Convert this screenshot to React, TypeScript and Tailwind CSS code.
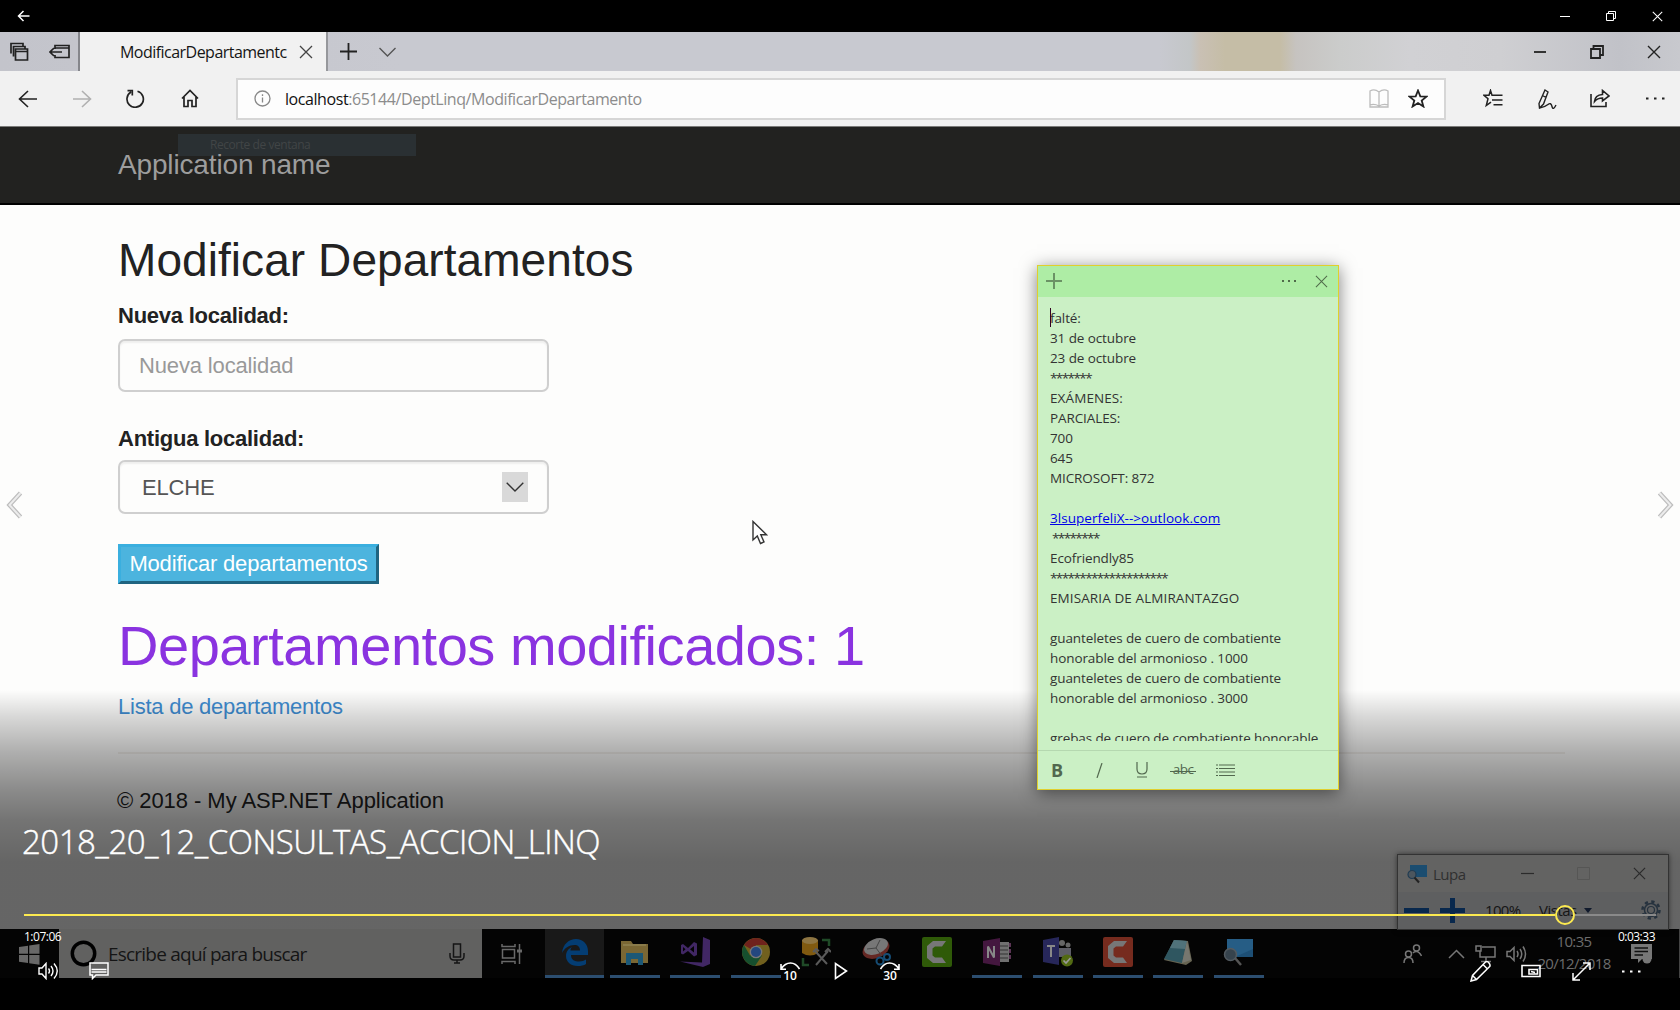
import React from "react";

type IconProps = { w: number; h: number; box?: string; className?: string; sw?: number; children: React.ReactNode };

function Ico({ w, h, box, className = "", sw = 1.5, children }: IconProps) {
  return (
    <svg width={w} height={h} viewBox={box ?? `0 0 ${w} ${h}`} fill="none" stroke="currentColor" strokeWidth={sw} className={`block shrink-0 ${className}`}>
      {children}
    </svg>
  );
}

function Cross({ size, sw = 1.3, className = "" }: { size: number; sw?: number; className?: string }) {
  return (
    <Ico w={size} h={size} box="0 0 14 14" sw={sw} className={className}>
      <path d="M1 1L13 13M13 1L1 13" />
    </Ico>
  );
}

function TitleBar() {
  return (
    <div className="flex h-8 shrink-0 items-center bg-black pl-[17px] pr-[18px] text-white">
      <Ico w={13} h={12} sw={1.5}>
        <path d="M12.5 6H1.5M6.5 1L1.5 6L6.5 11" />
      </Ico>
      <div className="ml-auto flex items-center gap-[36px]">
        <Ico w={10} h={10} sw={1}>
          <path d="M0 5.5H10" />
        </Ico>
        <Ico w={10} h={10} sw={1}>
          <path d="M.5 2.5h7v7h-7zM2.5 2.5V.5h7v7h-2" />
        </Ico>
        <Cross size={11} sw={1.3} className="-mr-[1px]" />
      </div>
    </div>
  );
}

function TabStrip() {
  return (
    <div className="flex h-[39px] shrink-0 bg-[linear-gradient(90deg,#c3c4cb_0,#c8c9d0_400px,#c8c9d0_1160px,#c3c6c7_1190px,#c9c0b4_1200px,#c5bda6_1225px,#c5bda6_1280px,#c6c3c0_1296px,#cbcccb_1340px,#d1d1d4_1410px,#cfcfd2_1500px,#c1c2c8_1620px,#c8c9ce_1680px)] text-[#222]">
      <div className="flex w-[80px] items-center border-r-2 border-[#85868b] pl-[10px]">
        <Ico w={19} h={19} sw={1.7}>
          <path d="M5.5 7h12v11h-12zM5.5 9.5h12M3.500 14.500V4.500H15V7M1 11.500V1.500H13V4" />
        </Ico>
        <Ico w={21} h={15} sw={1.7} className="ml-[20px]">
          <path d="M6 5V1.500H20V13.500H6V11M6 4h14M1 8h12M5 4L1 8L5 12" />
        </Ico>
      </div>
      <div className="flex w-[248px] items-center border-r-2 border-[#96979b] bg-[#f1f1f1] pl-[40px]">
        <span className="w-[169px] overflow-hidden whitespace-nowrap font-['Open_Sans'] text-[16px] leading-[22px] tracking-[-0.53px] text-[#151515]">ModificarDepartamentc</span>
        <Cross size={14} className="ml-[10px] text-[#444]" />
      </div>
      <div className="flex items-center pl-[12px]">
        <Ico w={17} h={17} sw={1.8}>
          <path d="M8.500 0V17M0 8.500H17" />
        </Ico>
        <Ico w={17} h={10} sw={1.4} className="ml-[22px] text-[#555]">
          <path d="M.5 1L8.500 9L16.500 1" />
        </Ico>
      </div>
      <div className="ml-auto flex items-center pr-[19px]">
        <Ico w={14} h={14} sw={1.8}>
          <path d="M1 7H13" />
        </Ico>
        <Ico w={14} h={14} sw={1.8} className="ml-[43px]">
          <path d="M1 4h9v9h-9zM3.500 4V1h9.500v9h-3" />
        </Ico>
        <Cross size={14} sw={1.4} className="ml-[43px]" />
      </div>
    </div>
  );
}

function AddressRow() {
  return (
    <div className="flex h-[56px] shrink-0 items-center border-b border-[#7b7b79] bg-[#f1f1f1] pl-[18px] text-[#222]">
      <Ico w={20} h={18} sw={1.6}>
        <path d="M19 9H1.500M10 1L1.500 9L10 17" />
      </Ico>
      <Ico w={20} h={18} sw={1.6} className="ml-[34px] text-[#b0b0b0]">
        <path d="M1 9H18.500M10 1L18.500 9L10 17" />
      </Ico>
      <Ico w={20} h={19} sw={1.7} className="ml-[33px]">
        <path d="M12.500 2.200A8.200 8.200 0 1 1 6 3M2.500 1.600H7.300V6.400" />
      </Ico>
      <Ico w={18} h={19} sw={1.7} className="ml-[36px]">
        <path d="M1 9.500L9 1.500L17 9.500M3 8V17.500H7V11.500H11V17.500H15V8" />
      </Ico>
      <div className="ml-[37px] flex h-[42px] w-[1210px] items-center border-2 border-[#d6d6d6] bg-[#fdfdfd] pl-[16px]">
        <Ico w={17} h={17} sw={1.3} className="text-[#888]">
          <circle cx="8.500" cy="8.500" r="7.500" />
          <path d="M8.500 7.500V12.500M8.500 4.300V6" />
        </Ico>
        <span className="ml-[14px] whitespace-nowrap font-['Open_Sans'] text-[16px] leading-[22px] tracking-[-0.43px] text-[#8c8c8c]">
          <span className="text-[#111]">localhost</span>:65144/DeptLinq/ModificarDepartamento
        </span>
        <Ico w={20} h={19} sw={1.3} className="ml-auto text-[#bcbcbc]">
          <path d="M10 3Q5.500 -.5 1 2V16Q5.500 14.500 10 17Q14.500 14.500 19 16V2Q14.500 -.5 10 3V17M1 16V18H19V16" />
        </Ico>
        <Ico w={20} h={19} sw={1.8} className="ml-[19px] mr-[16px]">
          <path d="M10 1.500L12.300 7.300L18.500 7.600L13.700 11.500L15.400 17.500L10 14.100L4.600 17.500L6.300 11.500L1.500 7.600L7.700 7.300Z" />
        </Ico>
      </div>
      <Ico w={20} h={19} sw={1.5} className="ml-[37px]">
        <path d="M12.500 6.300L9 6.300L7.500 1.500L6 6.300H1L5 9.800L3.300 16.500L8 13.200M10.500 6.300H19.500M9 11H19.500M10.500 15.700H19.500" />
      </Ico>
      <Ico w={20} h={20} sw={1.4} className="ml-[34px]">
        <path d="M8 1L11 3L6.500 15L2.500 19L2 14.500ZM5.500 6.500L9 8.500M2.500 19Q8 18 11 15.500T15 17.500T19 16" />
      </Ico>
      <Ico w={20} h={19} sw={1.6} className="ml-[33px]">
        <path d="M1 5V17.500H16V13M4.500 12.500Q5 6 12.500 5.500V1.500L19 7L12.500 12V9Q7.500 9 4.500 12.500Z" />
      </Ico>
      <Ico w={19} h={3} className="ml-[36px]">
        <path d="M0 1.500H2.500M8 1.500H10.500M16 1.500H18.500" strokeWidth="2.200" />
      </Ico>
    </div>
  );
}

function AppHeader() {
  return (
    <div className="relative h-[78px] shrink-0 border-b-2 border-black bg-[#222220] pl-[118px]">
      <div className="absolute left-[178px] top-[7px] h-[22px] w-[238px] bg-[#2a3033] pl-[32px] font-['Open_Sans'] text-[12px] leading-[21px] tracking-[-0.45px] text-[#414546]">Recorte de ventana</div>
      <div className="relative pt-[22px] font-['Liberation_Sans'] text-[28px] leading-[32px] tracking-[-0.15px] text-[#9d9d9d]">Application name</div>
    </div>
  );
}

function FormPage() {
  return (
    <div className="flex h-[724px] shrink-0 flex-col items-start bg-[#fdfdfc] pl-[118px] font-['Liberation_Sans'] text-[#222]">
      <h2 className="mt-[29px] h-[52px] whitespace-nowrap text-[46px] leading-[52px] tracking-[0.07px]">Modificar Departamentos</h2>
      <label className="mt-[18px] h-[24px] whitespace-nowrap text-[22px] font-bold leading-[24px] tracking-[-0.25px]">Nueva localidad:</label>
      <div className="mt-[11px] flex h-[53px] w-[431px] items-center rounded-[7px] border-2 border-[#cfcfcf] pl-[19px] text-[22px] tracking-[-0.15px] text-[#999] shadow-[inset_0_2px_2px_rgba(0,0,0,0.06)]">
        <span className="whitespace-nowrap">Nueva localidad</span>
      </div>
      <label className="mt-[35px] h-[24px] whitespace-nowrap text-[22px] font-bold leading-[24px] tracking-[-0.25px]">Antigua localidad:</label>
      <div className="mt-[9px] flex h-[54px] w-[431px] items-center justify-between rounded-[7px] border-2 border-[#cfcfcf] pl-[22px] pr-[19px] text-[22px] tracking-[-0.15px] text-[#555] shadow-[inset_0_2px_2px_rgba(0,0,0,0.06)]">
        <span>ELCHE</span>
        <div className="flex h-[30px] w-[26px] items-center justify-center bg-[#d9d9d9]">
          <Ico w={18} h={10} sw={1.4} className="text-[#333]">
            <path d="M.7 .8L9 9L17.300 .8" />
          </Ico>
        </div>
      </div>
      <div className="mt-[30px] flex h-[40px] w-[261px] items-center justify-center whitespace-nowrap border-[3px] border-b-[#1f6480] border-l-[#3aafdf] border-r-[#1f6480] border-t-[#3aafdf] bg-[#4cb4de] pb-px text-[22px] tracking-[-0.17px] text-white">Modificar departamentos</div>
      <h1 className="mt-[30px] h-[64px] whitespace-nowrap text-[56px] leading-[64px] tracking-[-0.46px] text-[#8a33e0]">Departamentos modificados: 1</h1>
      <a className="mt-[16px] h-[26px] whitespace-nowrap text-[22px] leading-[26px] tracking-[-0.24px] text-[#3f8dd2]">Lista de departamentos</a>
      <div className="mt-[32px] h-[2px] w-[1447px] bg-[#f2f0ec]" />
      <p className="-ml-px mt-[34px] h-[26px] whitespace-nowrap text-[22px] leading-[26px] tracking-[-0.05px]">© 2018 - My ASP.NET Application</p>
    </div>
  );
}

const camtasia = (bg: string) => (
  <Ico w={30} h={30} sw={0}>
    <rect width="30" height="30" rx="2" fill={bg} />
    <path d="M24 4H11L5 9V21L11 26H24L20 20.500H13L10.500 18.500V11.500L13 9.500H20Z" fill="#777" />
  </Ico>
);

const magnifier = (
  <Ico w={31} h={30} sw={0}>
    <path d="M4 2H30V20H4Z" fill="#1d4f75" />
    <path d="M4 2H30V12L12 20H4Z" fill="#265d85" />
    <path d="M12 21L18 28" stroke="#555" strokeWidth="2.500" />
    <circle cx="7.500" cy="17.500" r="6" fill="#36434d" stroke="#525a60" strokeWidth="1.500" />
  </Ico>
);

const apps: { icon: React.ReactNode; tile?: boolean; open?: boolean }[] = [
  {
    tile: true,
    open: true,
    icon: (
      <Ico w={26} h={27} sw={0}>
        <path d="M0 14C1 5 7 0 14 0C21 0 26 5 26 12V16H9C9 21 13 22.500 17 22.500C20 22.500 22 21.500 24 20.500V25C22 26.500 19 27 15.500 27C9 27 4 23 4 17C4 12.500 6.500 9.500 10 8C8.500 9.500 8.500 11 8.500 11.500H18C18 8 16 6 12.500 6C7 6 2.500 9 0 14Z" fill="#043d73" />
      </Ico>
    ),
  },
  {
    open: true,
    icon: (
      <Ico w={27} h={25} sw={0}>
        <path d="M0 1H10L12 4H27V23H0Z" fill="#7a6734" />
        <path d="M2 4H25V6H2Z" fill="#8a7b4a" />
        <path d="M5 13H22V25H17V19H10V25H5Z" fill="#1c5876" />
      </Ico>
    ),
  },
  {
    open: true,
    icon: (
      <Ico w={30} h={30} sw={0}>
        <path d="M23 0L30 3V27L23 30L0 24.500L22 25.500Z" fill="#412764" />
        <path d="M1 8L3 7L8 11L14 5L17 6.500V18L14 19.500L8 14L3 17.500L1 16.500ZM3 10V14.500L5.500 12.300ZM14 9L10 12.300L14 15.500Z" fill="#412764" fillRule="evenodd" />
      </Ico>
    ),
  },
  {
    open: true,
    icon: (
      <Ico w={28} h={28} sw={0}>
        <circle cx="14" cy="14" r="14" fill="#71601e" />
        <path d="M14 14L1.900 7A14 14 0 0 1 26.100 7H14Z" fill="#6f221c" />
        <path d="M1.900 7A14 14 0 0 0 13 28L20 17.500H8Z" fill="#164f2e" />
        <circle cx="14" cy="14" r="6.300" fill="#777" />
        <circle cx="14" cy="14" r="5" fill="#23477f" />
      </Ico>
    ),
  },
  {
    icon: (
      <Ico w={30} h={30} sw={0}>
        <path d="M1 3V16Q9 21 17 16V3Z" fill="#805a10" />
        <ellipse cx="9" cy="3.500" rx="8" ry="3.500" fill="#8d7542" />
        <path d="M21 3H28V9M2 21V28H8" stroke="#1f4a27" strokeWidth="2.500" />
        <path d="M14 14L26 27M27 14L15 28" stroke="#5a5a5a" strokeWidth="2" />
        <path d="M24 15L27 12L30 15M12 15L15 12L18 14" stroke="#5a5a5a" strokeWidth="2" />
      </Ico>
    ),
  },
  {
    icon: (
      <Ico w={29} h={30} sw={0}>
        <ellipse cx="14" cy="12" rx="14" ry="9" transform="rotate(-22 14 12)" fill="#652824" />
        <ellipse cx="14" cy="9.500" rx="12.500" ry="7.500" transform="rotate(-22 14 9.500)" fill="#777" />
        <path d="M14 11L18 3M14 11L5 12M14 11L20 19" stroke="#444" strokeWidth="1" />
        <circle cx="18" cy="24" r="3.500" stroke="#164d75" strokeWidth="2" />
        <circle cx="25" cy="20" r="3" stroke="#164d75" strokeWidth="2" />
      </Ico>
    ),
  },
  { icon: camtasia("#2f5a08") },
  {
    open: true,
    icon: (
      <Ico w={28} h={28} sw={0}>
        <path d="M14 4H26V24H14Z" fill="#707070" />
        <path d="M26 5h2v4h-2zM26 11h2v4h-2zM26 17h2v4h-2z" fill="#5b3555" />
        <path d="M17 8H25M17 12H25M17 16H25M17 20H25" stroke="#333" strokeWidth="1" />
        <path d="M0 3L17 0V28L0 25Z" fill="#44173f" />
        <path d="M5 20V8.500L11 19.500V8" stroke="#888" strokeWidth="2" />
      </Ico>
    ),
  },
  {
    open: true,
    icon: (
      <Ico w={30} h={30} sw={0}>
        <circle cx="19" cy="6" r="3" fill="#666" />
        <circle cx="25" cy="8" r="2.500" fill="#666" />
        <path d="M15 11H28V20H15Z" fill="#5d5d66" />
        <path d="M0 3L16 0V28L0 25Z" fill="#27275a" />
        <path d="M4 9H12M8 9V20" stroke="#888" strokeWidth="2" />
        <circle cx="24" cy="23.500" r="6" fill="#526a13" />
        <path d="M20.500 23.500L23 26L27.500 21" stroke="#999" strokeWidth="1.700" />
      </Ico>
    ),
  },
  { open: true, icon: camtasia("#762b1e") },
  {
    open: true,
    icon: (
      <Ico w={28} h={28} sw={0}>
        <path d="M10 2L24 3L28 23L22 27L0 22Z" fill="#676452" />
        <path d="M10 2L23 3L18 25L0 21Z" fill="#2f5660" />
        <path d="M10 2L23 3L21 11L6 10Z" fill="#50727a" />
        <path d="M23 3L27 22L18 25Z" fill="#77776f" />
      </Ico>
    ),
  },
  { open: true, icon: magnifier },
];

function Taskbar() {
  return (
    <div className="flex h-[49px] shrink-0 bg-[#040404]">
      <div className="flex w-[59px] items-center pl-[19px]">
        <Ico w={21} h={21} sw={0} className="mt-[2px]">
          <path d="M0 3L9 1.700V9.800H0ZM10.200 1.500L20.500 0V9.800H10.200ZM0 11H9V19L0 17.800ZM10.200 11H20.500V20.800L10.200 19.300Z" fill="#686868" />
        </Ico>
      </div>
      <div className="flex w-[423px] items-center bg-[#616160] pl-[11px] pr-[17px]">
        <Ico w={27} h={27} sw={3.5} className="text-black">
          <circle cx="13.500" cy="13.500" r="11.200" />
        </Ico>
        <span className="ml-[11px] whitespace-nowrap font-['Open_Sans'] text-[19px] leading-[26px] tracking-[-0.78px] text-[#151515]">Escribe aquí para buscar</span>
        <Ico w={16} h={21} sw={1.500} className="ml-auto text-[#151515]">
          <path d="M4.500 1H11.500V14H4.500ZM1 10V13Q1 17 5 17H11Q15 17 15 13V10M8 17V20M5 20H11" />
        </Ico>
      </div>
      <div className="flex w-[63px] items-center pl-[19px]">
        <Ico w={21} h={20} sw={1.500} className="text-[#696969]">
          <path d="M1.500 5.500H13.500V14H1.500ZM1 0V2.500H14V0M1 20V17.500H14V20M18.500 0V20" />
          <path d="M16 7H21" strokeWidth="3" />
        </Ico>
      </div>
      <div className="flex">
        {apps.map((a, i) => (
          <div key={i} className={`mr-[1.4px] flex w-[59px] flex-col items-center ${a.tile ? "bg-[#191919]" : ""}`}>
            <div className="flex h-[46px] items-center justify-center">{a.icon}</div>
            {a.open && <div className={`h-[3px] bg-[#2c4e70] ${a.tile ? "w-[59px]" : "w-[50px]"}`} />}
          </div>
        ))}
      </div>
      <div className="ml-auto flex h-[49px] items-center border-r border-[#444] pr-[27px] text-[#777]">
        <Ico w={19} h={20} sw={1.500}>
          <circle cx="13.500" cy="4" r="3" />
          <circle cx="5.500" cy="10" r="3" />
          <path d="M1 19Q1 13.500 5.500 13.500T10 19M10 9Q11 7.500 13.500 7.500T18.500 12" />
        </Ico>
        <Ico w={17} h={10} sw={1.500} className="ml-[26px]">
          <path d="M1 9L8.500 1.500L16 9" />
        </Ico>
        <Ico w={21} h={18} sw={1.500} className="ml-[10px]">
          <path d="M7 2H20V12H5V6M11 12V16M6 16.500H16M1 1H6V6H1Z" />
        </Ico>
        <Ico w={21} h={18} sw={1.500} className="ml-[10px]">
          <path d="M1 6.500H4L8 2.500V15.500L4 11.500H1ZM11 6Q13 9 11 12M14 4Q17.500 9 14 14M17 1.500Q22 9 17 16.500" />
        </Ico>
        <div className="ml-[11px] w-[72px] pb-[4px] text-center font-['Open_Sans'] text-[15px] leading-[22px] tracking-[-0.65px] text-[#6c6c6c]">
          <div>10:35</div>
          <div className="-mx-2 whitespace-nowrap">20/12/2018</div>
        </div>
        <Ico w={21} h={20} sw={0} className="ml-[21px]">
          <path d="M0 0H21V15H11L7 19V15H0Z" fill="#777" />
          <path d="M3.500 4H17M3.500 7.500H17M3.500 11H12" stroke="#111" strokeWidth="1.500" />
          <circle cx="16" cy="15" r="4.500" fill="#777" stroke="#050505" />
        </Ico>
      </div>
    </div>
  );
}

type Line = { t: string; kind?: "stars" | "caps" | "link" };

const noteLines: Line[] = [
  { t: "falté:" },
  { t: "31 de octubre" },
  { t: "23 de octubre" },
  { t: "*******", kind: "stars" },
  { t: "EXÁMENES:", kind: "caps" },
  { t: "PARCIALES:" },
  { t: "700" },
  { t: "645" },
  { t: "MICROSOFT: 872" },
  { t: "" },
  { t: "3lsuperfeliX-->outlook.com", kind: "link" },
  { t: " ********", kind: "stars" },
  { t: "Ecofriendly85" },
  { t: "********************", kind: "stars" },
  { t: "EMISARIA DE ALMIRANTAZGO", kind: "caps" },
  { t: "" },
  { t: "guanteletes de cuero de combatiente" },
  { t: "honorable del armonioso . 1000" },
  { t: "guanteletes de cuero de combatiente" },
  { t: "honorable del armonioso . 3000" },
  { t: "" },
  { t: "grebas de cuero de combatiente honorable" },
];

const lineStyle = {
  stars: "tracking-[-1.58px]",
  caps: "tracking-[0.1px]",
  link: "tracking-[0.05px] text-[#0000e8] underline",
};

function StickyNote() {
  return (
    <div className="absolute left-[1037px] top-[265px] flex h-[525px] w-[302px] flex-col border border-[#e0cf2c] bg-[#cbf0c5] font-['Open_Sans'] shadow-[0_3px_16px_rgba(0,0,0,0.5)]">
      <div className="flex h-[31px] shrink-0 items-center bg-[#aeeda5] pb-px pl-[8px] pr-[10px] text-[#6b9265]">
        <Ico w={16} h={16} sw={2}>
          <path d="M8 0V16M0 8H16" />
        </Ico>
        <Ico w={15} h={2} sw={2} className="ml-auto text-[#4f6b4a]">
          <path d="M0 1H2M6 1H8M12 1H14" />
        </Ico>
        <Cross size={13} sw={1.100} className="ml-[18px] text-[#4f6b4a]" />
      </div>
      <div className="relative h-[444px] shrink-0 overflow-hidden whitespace-pre pl-[12px] pt-[11px] text-[13.500px] leading-[20px] tracking-[-0.1px] text-[#333]">
        <div className="absolute left-[12px] top-[11px] h-[19px] w-px bg-[#302]" />
        {noteLines.map((l, i) => (
          <div key={i} className="h-[20px]">
            <span className={l.kind ? lineStyle[l.kind] : ""}>{l.t}</span>
          </div>
        ))}
      </div>
      <div className="mt-[9px] flex flex-1 items-center border-t border-[#b5d8b0] pl-[13px] text-[#52684e]">
        <span className="w-[45px] text-[18px] font-bold leading-none">B</span>
        <Ico w={7} h={15} sw={1.200}>
          <path d="M6 0L1 15" />
        </Ico>
        <Ico w={12} h={16} sw={1.200} className="ml-[33px]">
          <path d="M1 0V7Q1 12 6 12T11 7V0M1 15H11" />
        </Ico>
        <span className="relative ml-[22px] flex w-[26px] items-center justify-center text-[13.500px] leading-none tracking-[-0.5px]">
          abc
          <i className="absolute inset-x-0 top-[8px] h-px bg-[#52684e]" />
        </span>
        <Ico w={19} h={13} sw={1.200} className="ml-[20px]">
          <path d="M0 1H2M3 1H19M0 4.500H2M3 4.500H19M0 8H2M3 8H19M0 11.500H2M3 11.500H19" />
        </Ico>
      </div>
    </div>
  );
}

function Lupa() {
  return (
    <div className="absolute left-[1397px] top-[854px] flex h-[76px] w-[272px] flex-col border border-[#333] bg-[#636362] shadow-[0_0_5px_rgba(0,0,0,0.5)]">
      <div className="flex h-[37px] items-center pl-[9px] pr-[22px] text-[#2b2b2b]">
        <Ico w={21} h={20} sw={0}>
          <path d="M3 1H20V13H3Z" fill="#1b4d70" />
          <circle cx="5" cy="10.500" r="4" fill="#4c565e" stroke="#213c52" strokeWidth="1.200" />
          <path d="M7.500 13.500L12 18.500" stroke="#222" strokeWidth="2" />
        </Ico>
        <span className="ml-[5px] font-['Open_Sans'] text-[15px] leading-5 tracking-[-0.5px] text-[#303030]">Lupa</span>
        <Ico w={13} h={13} sw={1.200} className="ml-auto">
          <path d="M0 6.500H13" />
        </Ico>
        <Ico w={13} h={13} sw={1} className="ml-[43px] text-[#565655]">
          <path d="M.5 .5h12v12h-12z" />
        </Ico>
        <Cross size={13} className="ml-[43px]" />
      </div>
      <div className="flex flex-1 items-center bg-[#5e5f60] pb-px pl-[6px] pr-[7px] font-['Open_Sans'] text-[15px] leading-5 text-[#151515]">
        <Ico w={25} h={25} sw={5} className="text-[#08284d]">
          <path d="M0 12.500H25" />
        </Ico>
        <Ico w={25} h={25} sw={5} className="ml-[11px] text-[#08284d]">
          <path d="M0 12.500H25M12.500 0V25" />
        </Ico>
        <span className="ml-[20px] w-[54px] tracking-[-0.7px]">100%</span>
        <span className="w-[45px] tracking-[-0.5px]">Vistas</span>
        <Ico w={8} h={5} sw={0}>
          <path d="M0 0H8L4 5Z" fill="#101a2c" />
        </Ico>
        <Ico w={20} h={20} sw={2} className="ml-auto text-[#26323e]">
          <circle cx="10" cy="10" r="8.500" strokeDasharray="3.300 3.375" strokeWidth="2.500" />
          <circle cx="10" cy="10" r="6.500" strokeWidth="1.500" />
          <circle cx="10" cy="10" r="3.500" strokeWidth="1.200" />
        </Ico>
      </div>
    </div>
  );
}

function PlayerOverlay() {
  return (
    <div className="absolute inset-x-0 bottom-0 flex h-[190px] flex-col font-['Open_Sans'] text-white">
      <div className="h-[48px] whitespace-nowrap pl-[22px] text-[33px] font-light leading-[43px] tracking-[-0.5px] [-webkit-text-stroke:0.4px_white]">2018_20_12_CONSULTAS_ACCION_LINQ</div>
      <div className="mt-[37px] flex h-[20px] items-center pl-[24px] pr-[24px]">
        <div className="h-[2px] w-[1531px] bg-[#fcea50]" />
        <div className="h-[20px] w-[20px] rounded-full border-2 border-[#fcea50]" />
        <div className="h-[2px] flex-1 bg-[#8a8a8a]" />
      </div>
      <div className="mt-[4px] flex h-[16px] justify-between pl-[24px] pr-[25px] text-[12px] leading-[16px] tracking-[-0.5px]">
        <span>1:07:06</span>
        <span>0:03:33</span>
      </div>
      <div className="mt-[14px] flex h-[24px] items-center pl-[38px] pr-[39px]">
        <Ico w={21} h={18} sw={1.400}>
          <path d="M1 6H4L8 1.500V16.500L4 12H1ZM10.500 6.500Q12.500 9 10.500 11.500M13 4Q17 9 13 14M16 1.500Q22.500 9 16 16.500" />
        </Ico>
        <Ico w={20} h={18} sw={1.500} className="ml-[30px]">
          <path d="M1 1H19V13H7L3.500 16.500V13H1ZM2.500 7.500H17.500M2.500 10H17.500" />
        </Ico>
        <div className="ml-[671px] flex items-center">
          <SkipIcon label="10" flip />
          <Ico w={14} h={18} sw={1.600} className="ml-[34px]">
            <path d="M1.500 1.500V16.500L12.500 9Z" />
          </Ico>
          <SkipIcon label="30" className="ml-[32px]" />
        </div>
        <Ico w={21} h={21} sw={1.500} className="ml-auto">
          <path d="M15 1.500Q17 -.5 19 2T19.200 6L6.500 18.500L1 20L2.500 14.500ZM13 3.500L17.500 8M2.500 14.500L6.500 18.500" />
        </Ico>
        <Ico w={20} h={14} sw={1.600} className="ml-[30px]">
          <path d="M1 1.500H19V12.500H1ZM8 5.500H16.500V10H8ZM10 7.500L14 8.500" />
        </Ico>
        <Ico w={19} h={19} sw={1.500} className="ml-[31px]">
          <path d="M1.500 17.500L17.500 1.500M11 1H18V8M1 11V18H8" />
        </Ico>
        <Ico w={19} h={3} sw={2} className="ml-[31px]">
          <path d="M0 1.500H2.500M8 1.500H10.500M16 1.500H18.500" />
        </Ico>
      </div>
    </div>
  );
}

function SkipIcon({ label, flip = false, className = "" }: { label: string; flip?: boolean; className?: string }) {
  return (
    <div className={`flex w-[20px] flex-col items-center ${className}`}>
      <Ico w={20} h={8} sw={1.600} className={flip ? "" : "-scale-x-100"}>
        <path d="M1 7Q5 1 10.500 1T19.500 7M1 2V7.200H6" />
      </Ico>
      <span className="h-[11px] text-[12px] font-semibold leading-[11px]">{label}</span>
    </div>
  );
}

function FlipArrow({ className }: { className: string }) {
  return (
    <Ico w={17} h={30} className={`absolute ${className}`}>
      <path d="M14.500 3L3.500 15L14.500 27" stroke="#bdbdbd" strokeWidth="4.500" />
      <path d="M14.500 3L3.500 15L14.500 27" stroke="#ececec" strokeWidth="2" />
    </Ico>
  );
}

export default function App() {
  return (
    <div className="relative flex h-[1010px] w-[1680px] flex-col overflow-hidden bg-black">
      <TitleBar />
      <TabStrip />
      <AddressRow />
      <AppHeader />
      <FormPage />
      <div className="pointer-events-none absolute inset-x-0 top-[690px] h-[239px] bg-[linear-gradient(180deg,rgba(0,0,0,0)_0,rgba(0,0,0,0.15)_27px,rgba(0,0,0,0.31)_62px,rgba(0,0,0,0.45)_100px,rgba(0,0,0,0.54)_130px,rgba(0,0,0,0.6)_172px)]" />
      <Taskbar />
      <Lupa />
      <StickyNote />
      <FlipArrow className="left-[6px] top-[490px]" />
      <FlipArrow className="left-[1657px] top-[490px] -scale-x-100" />
      <Ico w={16} h={25} sw={1.400} className="absolute left-[752px] top-[520px] text-[#333]">
        <path d="M1 1.500V20L5.300 16L8.500 23.500L12 22L8.800 14.700H14.500Z" fill="#fff" />
      </Ico>
      <PlayerOverlay />
    </div>
  );
}
